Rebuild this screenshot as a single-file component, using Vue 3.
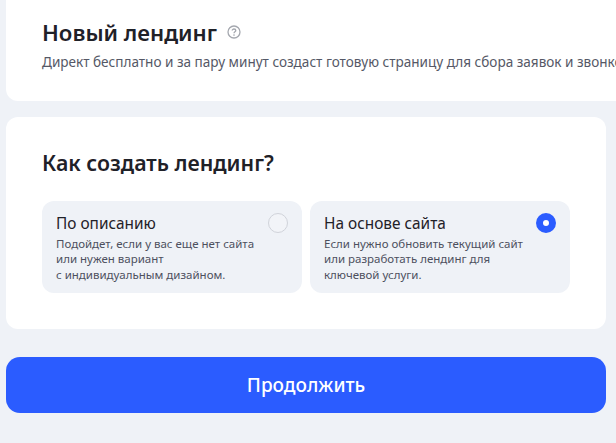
<script setup>
const cards = [
  { title: 'По описанию', lines: ['Подойдет, если у вас еще нет сайта', 'или нужен вариант', 'с индивидуальным дизайном.'], on: false },
  { title: 'На основе сайта', lines: ['Если нужно обновить текущий сайт', 'или разработать лендинг для', 'ключевой услуги.'], on: true }
]
</script>
<template>
  <div class="page">
    <section class="top">
      <div class="head">
        <h1>Новый лендинг</h1>
        <svg class="help" width="14" height="14" viewBox="0 0 14 14" fill="none">
          <circle cx="7" cy="7" r="6" stroke="#a4a7ae" stroke-width="1.3"/>
          <path d="M5.2 5.6c0-1 .8-1.6 1.8-1.6s1.8.6 1.8 1.5c0 1.3-1.8 1.3-1.8 2.7" stroke="#a4a7ae" stroke-width="1.3"/>
          <circle cx="7" cy="10.1" r=".8" fill="#a4a7ae"/>
        </svg>
      </div>
      <p class="sub">Директ бесплатно и за пару минут создаст готовую страницу для сбора заявок и звонков</p>
    </section>
    <section class="main">
      <h2>Как создать лендинг?</h2>
      <div class="cards">
        <div v-for="c in cards" :key="c.title" class="card">
          <div class="card-title">{{ c.title }}</div>
          <div class="card-text">
            <div v-for="l in c.lines" :key="l" class="line">{{ l }}</div>
          </div>
          <span class="radio" :class="{ on: c.on }"></span>
        </div>
      </div>
    </section>
    <button class="cta">Продолжить</button>
  </div>
</template>
<style>
html, body { margin: 0; background: #eff2f7; }
</style>
<style scoped>
.page {
  width: 616px; height: 443px; overflow: hidden; box-sizing: border-box;
  padding: 0 10px 0 6px; background: #eff2f7;
  font-family: "Noto Sans", sans-serif; color: #1f2128;
}
.top {
  height: 101px; box-sizing: border-box; padding: 18px 0 0 36px; background: #fff;
  border-radius: 0 0 0 12px; overflow: hidden; white-space: nowrap; margin-right: -10px;
}
.head { display: flex; align-items: center; gap: 10px; height: 30px; }
.help { margin-top: -3px; }
h1 { margin: 0; font-size: 22.2px; font-weight: 600; line-height: 30px; }
.sub { margin: 5px 0 0; font-size: 13.55px; line-height: 18px; color: #555866; }
.main {
  margin-top: 16px; height: 212px; box-sizing: border-box; padding: 31px 36px 0;
  background: #fff; border-radius: 12px;
}
h2 { margin: 0; font-size: 21.3px; font-weight: 600; line-height: 30px; }
.cards { display: grid; grid-template-columns: 260px 260px; gap: 8px; margin-top: 23px; }
.card {
  position: relative; height: 92px; box-sizing: border-box; padding: 13px 14px 0;
  background: #eff2f7; border-radius: 12px;
}
.card-title { font-size: 15.4px; line-height: 20px; font-weight: 400; }
.card-text { margin-top: 2px; font-size: 11.5px; color: #4d505e; }
.line { height: 15.25px; line-height: 15.25px; white-space: nowrap; }
.radio {
  position: absolute; top: 12px; right: 14px; width: 20px; height: 20px; box-sizing: border-box;
  border-radius: 50%; border: 1px solid #d0d3da; background: #f2f4f8;
}
.radio.on { border: 7px solid #2b5cff; background: #fff; }
.cta {
  display: block; width: 100%; height: 56px; margin-top: 28px; border: 0; border-radius: 14px;
  background: #2b5cff; color: #fff; font: 500 19px "Noto Sans", sans-serif;
}
</style>
